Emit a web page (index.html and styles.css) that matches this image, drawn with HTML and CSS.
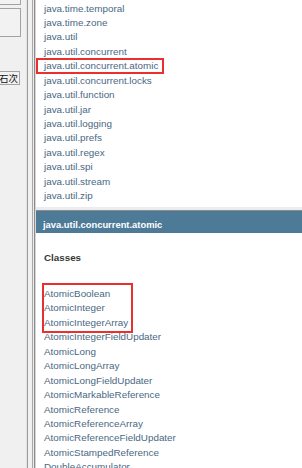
FILE: index.html
```html
<!DOCTYPE html>
<html>
<head>
<meta charset="utf-8">
<link rel="stylesheet" href="styles.css">
</head>
<body>
<div class="app">
  <div class="side">
    <div class="btn btn1"></div>
    <div class="btn btn2"></div>
    <div class="btn btn3">石次</div>
  </div>
  <div class="vsplit"></div>
  <div class="main">
    <div class="pkgframe">
      <ul class="list pkglist">
        <li>java.time.temporal</li>
        <li>java.time.zone</li>
        <li>java.util</li>
        <li>java.util.concurrent</li>
        <li>java.util.concurrent.atomic</li>
        <li>java.util.concurrent.locks</li>
        <li>java.util.function</li>
        <li>java.util.jar</li>
        <li>java.util.logging</li>
        <li>java.util.prefs</li>
        <li>java.util.regex</li>
        <li>java.util.spi</li>
        <li>java.util.stream</li>
        <li>java.util.zip</li>
      </ul>
      <div class="mark mark1"></div>
    </div>
    <div class="hsplit"></div>
    <div class="clsframe">
      <div class="bar">java.util.concurrent.atomic</div>
      <h2 class="title">Classes</h2>
      <ul class="list clslist">
        <li>AtomicBoolean</li>
        <li>AtomicInteger</li>
        <li>AtomicIntegerArray</li>
        <li>AtomicIntegerFieldUpdater</li>
        <li>AtomicLong</li>
        <li>AtomicLongArray</li>
        <li>AtomicLongFieldUpdater</li>
        <li>AtomicMarkableReference</li>
        <li>AtomicReference</li>
        <li>AtomicReferenceArray</li>
        <li>AtomicReferenceFieldUpdater</li>
        <li>AtomicStampedReference</li>
        <li>DoubleAccumulator</li>
        <li>DoubleAdder</li>
        <li>LongAccumulator</li>
        <li>LongAdder</li>
      </ul>
      <div class="mark mark2"></div>
    </div>
  </div>
</div>
</body>
</html>
```

FILE: styles.css
```css
html, body {
  margin: 0;
  padding: 0;
  width: 302px;
  height: 468px;
  overflow: hidden;
  background: #ffffff;
}

.app {
  display: flex;
  width: 302px;
  height: 468px;
}

.side {
  width: 27px;
  flex: none;
  background: #f0f0f0;
  display: flex;
  flex-direction: column;
  overflow: hidden;
  box-shadow: inset -6px 0 0 -5px #e2e2e2;
}

.btn {
  box-sizing: border-box;
  width: 23px;
  margin-left: -2px;
  border: 1px solid #a3a3a3;
  background: #f2f2f2;
  flex: none;
}

.btn1 {
  margin-top: -20px;
  height: 25px;
}

.btn2 {
  margin-top: 3px;
  height: 29px;
}

.btn3 {
  margin-top: 34px;
  height: 14px;
  width: 22px;
  font-family: "Noto Sans CJK SC", sans-serif;
  font-size: 9.5px;
  line-height: 12px;
  color: #111111;
  text-align: right;
  padding-right: 1px;
  white-space: nowrap;
  overflow: hidden;
}

.vsplit {
  width: 9px;
  flex: none;
  background: linear-gradient(to right,
    #9c9c9c 0, #9c9c9c 1px,
    #f0f0f0 1px, #f0f0f0 5px,
    #a8a8a8 5px, #a8a8a8 6px,
    #eeeeee 6px, #eeeeee 7px,
    #8a8a8a 7px, #8a8a8a 8px,
    #d8d8d8 8px, #d8d8d8 9px);
}

.main {
  flex: 1;
  display: flex;
  flex-direction: column;
  min-width: 0;
}

.pkgframe {
  position: relative;
  height: 207px;
  flex: none;
  overflow: hidden;
  background: #ffffff;
}

.hsplit {
  height: 4px;
  flex: none;
  background: linear-gradient(to bottom, #ececec 0, #ececec 3px, #8c8c8c 3px, #8c8c8c 4px);
}

.clsframe {
  position: relative;
  flex: 1;
  overflow: hidden;
  background: #ffffff;
}

.list {
  list-style: none;
  margin: 0;
  padding: 0 0 0 8px;
  font-family: "Liberation Sans", Arial, sans-serif;
  font-size: 9.85px;
  line-height: 14.44px;
  color: #4a6782;
  white-space: nowrap;
}

.pkglist {
  padding-top: 1.5px;
}

.bar {
  box-sizing: border-box;
  height: 22px;
  padding: 8px 0 0 7px;
  background: #4d7a97;
  color: #ffffff;
  font-family: "Liberation Sans", Arial, sans-serif;
  font-weight: bold;
  font-size: 9.4px;
  line-height: 11px;
  white-space: nowrap;
}

.title {
  margin: 19px 0 0 8px;
  font-family: "Liberation Sans", Arial, sans-serif;
  font-weight: bold;
  font-size: 9.8px;
  line-height: 12px;
  color: #353833;
}

.clslist {
  margin-top: 23px;
}

.mark {
  position: absolute;
  box-sizing: border-box;
  border: 2px solid #e8302f;
}

.mark1 {
  left: 0;
  top: 58px;
  width: 128px;
  height: 16px;
}

.mark2 {
  left: 6px;
  top: 72px;
  width: 91px;
  height: 50px;
}
```
